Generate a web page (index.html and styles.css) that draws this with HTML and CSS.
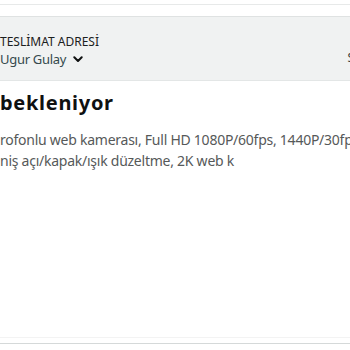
FILE: index.html
```html
<!DOCTYPE html>
<html lang="tr">
<head>
  <meta charset="UTF-8">
  <meta name="viewport" content="width=device-width, initial-scale=1.0">
  <title>Siparis</title>
  <link rel="stylesheet" href="styles.css">
</head>
<body>
  <div class="top-strip"></div>

  <div class="address-bar">
    <div class="address-info">
      <span class="address-label">TESLİMAT ADRESİ</span>
      <span class="address-name">Ugur Gulay
        <svg class="chevron" width="10" height="7" viewBox="0 0 10 7">
          <path d="M1.3 1.3 L5 5 L8.7 1.3" fill="none" stroke="#0f1111" stroke-width="2" stroke-linecap="round" stroke-linejoin="round"/>
        </svg>
      </span>
    </div>
    <span class="address-side">S</span>
  </div>

  <div class="order-box">
    <h2 class="order-status">bekleniyor</h2>
    <p class="order-desc">rofonlu web kamerası, Full HD 1080P/60fps, 1440P/30fp<br>niş açı/kapak/ışık düzeltme, 2K web k</p>
  </div>

  <div class="bottom-strip"></div>
</body>
</html>
```

FILE: styles.css
```css
body {
  margin: 0;
  padding: 0;
  font-family: "Noto Sans", "Open Sans", sans-serif;
  background-color: #fff;
  color: #0f1111;
  overflow: hidden;
  height: 350px;
  display: flex;
  flex-direction: column;
}

.top-strip {
  height: 11px;
  margin-top: 4px;
  border-top: 1px solid #e7e9e9;
  border-bottom: 1px solid #dfe2e2;
}

.address-bar {
  background-color: #f0f2f2;
  height: 64px;
  display: flex;
  justify-content: space-between;
  align-items: flex-start;
  padding-top: 16px;
  box-sizing: border-box;
  border-bottom: 1px solid #e3e6e6;
  overflow: hidden;
}

.address-info {
  display: flex;
  flex-direction: column;
}

.address-label {
  font-size: 12px;
  line-height: 17px;
  color: #1b2020;
}

.address-name {
  font-size: 13px;
  line-height: 18px;
  letter-spacing: -0.3px;
  color: #34494d;
  display: flex;
  align-items: center;
  gap: 7px;
}

.chevron {
  margin-top: 1px;
}

.address-side {
  font-size: 12px;
  line-height: 16px;
  margin-top: 17px;
  margin-right: -4px;
  color: #3a4040;
}

.order-box {
  flex: 1;
  padding-top: 9px;
  border-bottom: 1px solid #f3f3f3;
  margin-bottom: 5px;
}

.order-status {
  margin: 0;
  font-size: 20px;
  font-weight: bold;
  line-height: 26px;
  letter-spacing: 0.7px;
}

.order-desc {
  margin: 13px 0 0;
  font-size: 14px;
  line-height: 21px;
  letter-spacing: -0.25px;
  color: #565959;
  white-space: nowrap;
}

.bottom-strip {
  height: 6px;
  border-top: 1px solid #d5d9d9;
}
```
